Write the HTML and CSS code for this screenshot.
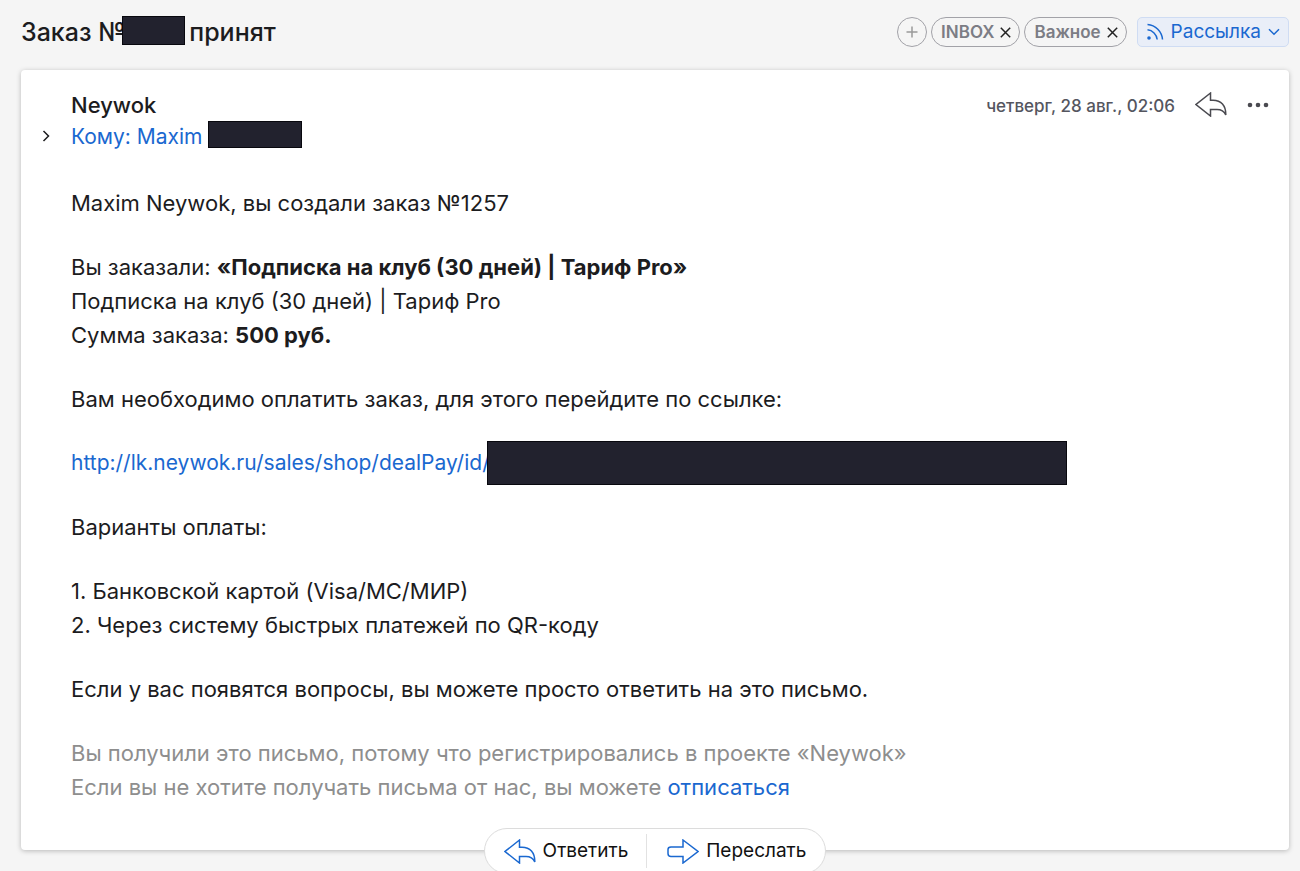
FILE: index.html
```html
<!DOCTYPE html>
<html lang="ru">
<head>
  <meta charset="UTF-8" />
  <meta name="viewport" content="width=device-width, initial-scale=1.0" />
  <title>Заказ принят</title>
  <link rel="stylesheet" href="styles.css">
</head>
<body>
  <header class="topbar">
    <h1 class="subject">Заказ №<span class="redacted redacted-number"></span> принят</h1>
    <div class="tags">
      <button class="tag tag-add" aria-label="Добавить метку">
        <svg width="12" height="12" viewBox="0 0 12 12"><path d="M6 0.5v11M0.5 6h11" /></svg>
      </button>
      <button class="tag">INBOX
        <svg width="11" height="11" viewBox="0 0 11 11"><path d="M0.8 0.8l9.400 9.400M10.200 0.800l-9.400 9.400" /></svg>
      </button>
      <button class="tag">Важное
        <svg width="11" height="11" viewBox="0 0 11 11"><path d="M0.8 0.8l9.400 9.400M10.200 0.800l-9.400 9.400" /></svg>
      </button>
      <button class="category">
        <svg width="18" height="18" viewBox="0 0 18 18">
          <path d="M1.500 1.500C9.500 2 16 8.500 16.500 16.500M1.500 6.800c5 0.400 9.300 4.700 9.700 9.700" />
          <circle cx="3" cy="15" r="1.800" />
        </svg>
        Рассылка
        <svg width="12" height="8" viewBox="0 0 12 8"><path d="M1 1.200l5 5 5-5" /></svg>
      </button>
    </div>
  </header>

  <main class="letter">
    <div class="letter-head">
      <button class="expand" aria-label="Показать детали">
        <svg width="8" height="12" viewBox="0 0 8 12"><path d="M1.500 1l5 5-5 5" /></svg>
      </button>
      <div class="people">
        <div class="sender">Neywok</div>
        <div class="to"><a class="recipient" href="#">Кому: Maxim</a><span class="redacted redacted-name"></span></div>
      </div>
      <div class="letter-tools">
        <time class="date">четверг, 28 авг., 02:06</time>
        <button class="tool" aria-label="Ответить">
          <svg width="32" height="25" viewBox="0 0 32 25"><path d="M15.500 1L1 12.500l14.500 11.500V17.500H22c4.500 0 7 1.500 8.800 5.500C31 13.500 26 8.200 18 8.200H15.500z" /></svg>
        </button>
        <button class="tool tool-more" aria-label="Ещё">
          <svg width="22" height="6" viewBox="0 0 22 6"><circle cx="3" cy="3" r="2.300" /><circle cx="11" cy="3" r="2.300" /><circle cx="19" cy="3" r="2.300" /></svg>
        </button>
      </div>
    </div>

    <div class="letter-body">
      <p>Maxim Neywok, вы создали заказ №1257</p>
      <p>Вы заказали: <b>«Подписка на клуб (30 дней) | Тариф Pro»</b><br>
        Подписка на клуб (30 дней) | Тариф Pro<br>
        Сумма заказа: <b>500 руб.</b></p>
      <p>Вам необходимо оплатить заказ, для этого перейдите по ссылке:</p>
      <p class="pay-link"><a href="#">http://lk.neywok.ru/sales/shop/dealPay/id/</a><span class="redacted redacted-link"></span></p>
      <p>Варианты оплаты:</p>
      <p>1. Банковской картой (Visa/МС/МИР)<br>
        2. Через систему быстрых платежей по QR-коду</p>
      <p>Если у вас появятся вопросы, вы можете просто ответить на это письмо.</p>
      <p class="note">Вы получили это письмо, потому что регистрировались в проекте «Neywok»<br>
        Если вы не хотите получать письма от нас, вы можете <a href="#">отписаться</a></p>
    </div>
  </main>

  <footer class="actions">
    <button class="action">
      <svg width="32" height="25" viewBox="0 0 32 25"><path d="M15.500 1L1 12.500l14.500 11.500V17.500H22c4.500 0 7 1.500 8.800 5.500C31 13.500 26 8.200 18 8.200H15.500z" /></svg>
      Ответить
    </button>
    <button class="action">
      <svg width="32" height="25" viewBox="0 0 32 25"><path d="M16 1l15 11.500L16 24v-6.500H4C2 17.500 1 16.500 1 14.500v-4C1 8.700 2 8 4 8H16z" /></svg>
      Переслать
    </button>
  </footer>
</body>
</html>
```

FILE: styles.css
```css
* {
  box-sizing: border-box;
}
body {
  margin: 0;
  padding: 0 11px 0 21px;
  background: #f5f5f5;
  color: #1c1c1e;
  font-family: Inter, "Liberation Sans", sans-serif;
  font-size: 22px;
  line-height: 34px;
  overflow: hidden;
}
button {
  display: flex;
  align-items: center;
  padding: 0;
  border: none;
  background: none;
  color: inherit;
  font: inherit;
  cursor: pointer;
}
svg {
  flex: none;
  fill: none;
  stroke: currentColor;
  stroke-width: 1.5;
}
a {
  color: #1a68d0;
  text-decoration: none;
}
p {
  margin: 0;
}
.redacted {
  display: inline-block;
  background: #22222e;
  border: 1px solid #08080e;
}

/* top bar */
.topbar {
  display: flex;
  justify-content: space-between;
  align-items: center;
  height: 70px;
  padding-bottom: 6px;
}
.subject {
  display: flex;
  align-items: center;
  margin: 0;
  font-size: 25px;
  font-weight: 500;
  white-space: pre;
}
.redacted-number {
  width: 63px;
  height: 29px;
  margin: -4px -2px 0 -4px;
}
.tags {
  display: flex;
  gap: 4px;
}
.tag {
  gap: 6px;
  height: 30px;
  padding: 0 8px 0 9px;
  border: 1px solid #a2a2a8;
  border-radius: 15px;
  color: #7c7d85;
  font-size: 17px;
  font-weight: 600;
}
.tag svg {
  color: #222;
}
.tag-add {
  justify-content: center;
  width: 30px;
  padding: 0;
}
.tag-add svg {
  color: #999;
}
.category {
  gap: 7px;
  height: 30px;
  margin-left: 6px;
  padding: 0 8px;
  border: 1px solid #cfdcf3;
  border-radius: 5px;
  background: #e9eef8;
  color: #1a68d0;
  font-size: 19px;
}
.category circle {
  fill: currentColor;
  stroke: none;
}

/* letter card */
.letter {
  padding: 19px 20px 46px 50px;
  background: #fff;
  border-radius: 4px;
  box-shadow: 0 1px 5px rgba(0, 0, 0, 0.25);
}
.letter-head {
  display: flex;
  align-items: flex-start;
  height: 97px;
}
.expand {
  justify-content: center;
  width: 50px;
  height: 32px;
  margin: 31px 0 0 -50px;
}
.people {
  flex: 1;
  line-height: 32px;
}
.sender {
  font-weight: 500;
}
.to {
  display: flex;
  align-items: flex-start;
  gap: 5px;
}
.recipient {
  font-size: 21px;
}
.redacted-name {
  width: 94px;
  height: 27px;
}
.letter-tools {
  display: flex;
  align-items: flex-start;
  gap: 20px;
  color: #4a4a50;
}
.date {
  color: #55565f;
  font-size: 17px;
  font-weight: 500;
}
.tool {
  height: 31px;
}
.tool-more circle {
  fill: currentColor;
  stroke: none;
}
.letter-body {
  display: flex;
  flex-direction: column;
  gap: 30px;
}
.pay-link {
  display: flex;
  align-items: center;
  height: 34px;
  font-size: 21px;
}
.redacted-link {
  width: 580px;
  height: 44px;
  margin-left: -3px;
}
.note {
  color: #8e8e8e;
}

/* reply / forward */
.actions {
  display: flex;
  align-items: center;
  position: relative;
  width: fit-content;
  height: 46px;
  margin: -22px auto 0;
  padding: 0 19px;
  border: 1px solid #dcdcdc;
  border-radius: 23px;
  background: #fff;
  color: #111;
  font-size: 19px;
}
.action {
  gap: 7px;
}
.action + .action {
  margin-left: 18px;
  padding-left: 20px;
  border-left: 1px solid #e2e2e2;
}
.action svg {
  color: #1a68d0;
}
```
